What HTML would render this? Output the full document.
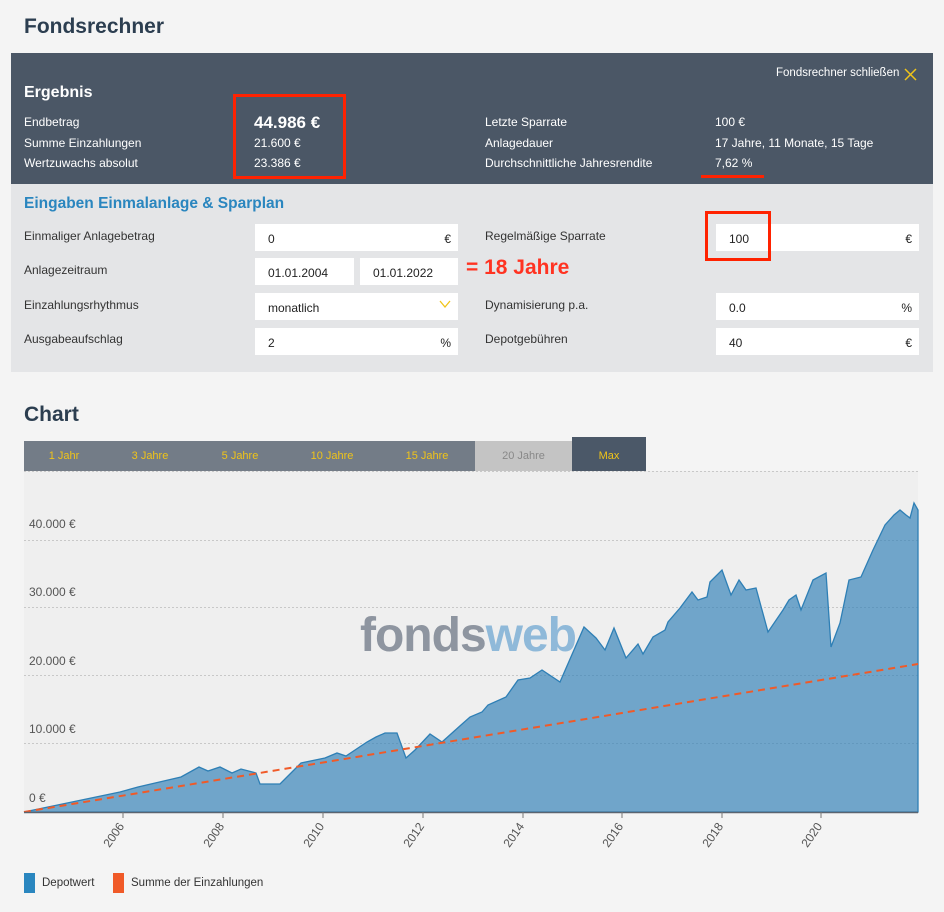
<!DOCTYPE html>
<html><head><meta charset="utf-8"><style>
*{margin:0;padding:0;box-sizing:border-box}
body{width:944px;height:912px;background:#f4f4f4;font-family:"Liberation Sans",sans-serif;position:relative;overflow:hidden;color:#2b2b2b}
.a{position:absolute;white-space:nowrap}
.w{color:#fff;font-size:12px}
.k{font-size:12px;color:#333}
.inp{position:absolute;background:#fff;height:27px;font-size:12px;color:#222;padding:8px 0 0 13px}
.inp span{position:absolute;right:7px;top:8px}
.tab{position:absolute;top:441px;height:30px;font-size:11px;color:#f0c419;text-align:center;line-height:30px}
.yl{position:absolute;left:29px;font-size:12px;color:#555}
.xl{position:absolute;font-size:12px;color:#555;transform:rotate(-55deg);transform-origin:right top}
</style></head><body>
<div class="a" style="left:24px;top:15px;font-size:21px;font-weight:bold;color:#2c3e50">Fondsrechner</div>
<div class="a" style="left:11px;top:53px;width:922px;height:131px;background:#4b5766"></div>
<div class="a w" style="left:776px;top:67px;font-size:11.5px">Fondsrechner schließen</div>
<svg class="a" style="left:904px;top:68px" width="13" height="13"><path d="M1 1L12 12M12 1L1 12" stroke="#f0c419" stroke-width="1.5"/></svg>
<div class="a w" style="left:24px;top:84px;font-size:16px;font-weight:bold">Ergebnis</div>
<div class="a w" style="left:24px;top:115px">Endbetrag</div>
<div class="a w" style="left:24px;top:136px">Summe Einzahlungen</div>
<div class="a w" style="left:24px;top:156px">Wertzuwachs absolut</div>
<div class="a w" style="left:254px;top:113px;font-size:17px;font-weight:bold">44.986 €</div>
<div class="a w" style="left:254px;top:136px">21.600 €</div>
<div class="a w" style="left:254px;top:156px">23.386 €</div>
<div class="a" style="left:233px;top:94px;width:113px;height:85px;border:3px solid #ff2200"></div>
<div class="a w" style="left:485px;top:115px">Letzte Sparrate</div>
<div class="a w" style="left:485px;top:136px">Anlagedauer</div>
<div class="a w" style="left:485px;top:156px">Durchschnittliche Jahresrendite</div>
<div class="a w" style="left:715px;top:115px">100 €</div>
<div class="a w" style="left:715px;top:136px">17 Jahre, 11 Monate, 15 Tage</div>
<div class="a w" style="left:715px;top:156px">7,62 %</div>
<div class="a" style="left:701px;top:175px;width:63px;height:3px;background:#ff2200"></div>
<div class="a" style="left:11px;top:184px;width:922px;height:188px;background:#e4e5e7"></div>
<div class="a" style="left:24px;top:195px;font-size:15.5px;font-weight:bold;color:#2a86bf">Eingaben Einmalanlage &amp; Sparplan</div>
<div class="a k" style="left:24px;top:229px">Einmaliger Anlagebetrag</div>
<div class="a k" style="left:24px;top:263px">Anlagezeitraum</div>
<div class="a k" style="left:24px;top:298px">Einzahlungsrhythmus</div>
<div class="a k" style="left:24px;top:332px">Ausgabeaufschlag</div>
<div class="a k" style="left:485px;top:229px">Regelmäßige Sparrate</div>
<div class="a k" style="left:485px;top:298px">Dynamisierung p.a.</div>
<div class="a k" style="left:485px;top:332px">Depotgebühren</div>
<div class="inp" style="left:255px;top:224px;width:203px">0<span>€</span></div>
<div class="inp" style="left:255px;top:258px;width:99px">01.01.2004</div>
<div class="inp" style="left:360px;top:258px;width:98px">01.01.2022</div>
<div class="inp" style="left:255px;top:293px;width:203px">monatlich<span style="top:5px"><svg width="12" height="10"><path d="M1 2L6 8L11 2" stroke="#f0c419" stroke-width="1.3" fill="none"/></svg></span></div>
<div class="inp" style="left:255px;top:328px;width:203px">2<span>%</span></div>
<div class="inp" style="left:716px;top:224px;width:203px">100<span>€</span></div>
<div class="inp" style="left:716px;top:293px;width:203px">0.0<span>%</span></div>
<div class="inp" style="left:716px;top:328px;width:203px">40<span>€</span></div>
<div class="a" style="left:705px;top:211px;width:66px;height:50px;border:3px solid #ff2200"></div>
<div class="a" style="left:466px;top:256px;font-size:21px;font-weight:bold;color:#ff3322">= 18 Jahre</div>
<div class="a" style="left:24px;top:403px;font-size:21px;font-weight:bold;color:#2c3e50">Chart</div>
<div class="a" style="left:24px;top:441px;width:451px;height:30px;background:#737c87"></div>
<div class="a" style="left:475px;top:441px;width:97px;height:30px;background:#c4c4c4"></div>
<div class="a" style="left:572px;top:437px;width:74px;height:34px;background:#4b5868"></div>
<div class="tab" style="left:24px;width:80px">1 Jahr</div>
<div class="tab" style="left:110px;width:80px">3 Jahre</div>
<div class="tab" style="left:200px;width:80px">5 Jahre</div>
<div class="tab" style="left:292px;width:80px">10 Jahre</div>
<div class="tab" style="left:387px;width:80px">15 Jahre</div>
<div class="tab" style="left:475px;width:97px;color:#888">20 Jahre</div>
<div class="tab" style="left:572px;width:74px">Max</div>
<svg class="a" style="left:0;top:0" width="944" height="912">
<rect x="24" y="471" width="894" height="341" fill="#efefef"/>
<g stroke="#c8c8c8" stroke-dasharray="2,2" stroke-width="1">
<line x1="24" y1="471.5" x2="918" y2="471.5"/><line x1="24" y1="540.5" x2="918" y2="540.5"/><line x1="24" y1="607.5" x2="918" y2="607.5"/><line x1="24" y1="675.5" x2="918" y2="675.5"/><line x1="24" y1="743.5" x2="918" y2="743.5"/></g>
<text x="360" y="651" font-family="Liberation Sans,sans-serif" font-weight="bold" font-size="48" fill="#8e95a0" letter-spacing="-1">fonds<tspan fill="#8fb9d9">web</tspan></text>
<path fill="rgba(52,130,184,0.68)" stroke="#2e7fb5" stroke-width="1.3" d="M24 812L120 792L138 787L181 777L199 767L208 771L220 767L232 773L241 769L256 773L260 784L280 784L289 775L301 763L325 758L337 753L346 756L367 742L376 737L385 733L397 733L406 758L415 750L430 734L442 742L461 725L470 717L482 712L488 705L506 697L518 680L530 678L542 670L560 682L584 627L596 638L605 650L614 628L626 658L638 644L643 654L653 637L665 630L668 622L680 608L692 592L698 600L707 597L710 582L722 570L731 595L739 580L746 590L756 588L768 632L783 610L789 600L796 595L801 610L813 580L826 573L831 647L840 623L849 580L861 577L873 550L885 525L894 515L900 510L906 515L910 518L914 503L918 510L918 812Z"/>
<line x1="24" y1="812" x2="918" y2="664" stroke="#f05a28" stroke-width="2" stroke-dasharray="7,5"/>
<line x1="24" y1="812.5" x2="918" y2="812.5" stroke="#5a6470" stroke-width="1.5"/>
<g stroke="#777"><line x1="123" y1="812" x2="123" y2="818"/><line x1="223" y1="812" x2="223" y2="818"/><line x1="323" y1="812" x2="323" y2="818"/><line x1="423" y1="812" x2="423" y2="818"/><line x1="523" y1="812" x2="523" y2="818"/><line x1="622" y1="812" x2="622" y2="818"/><line x1="722" y1="812" x2="722" y2="818"/><line x1="821" y1="812" x2="821" y2="818"/></g>
</svg>
<div class="yl" style="top:517px">40.000 €</div>
<div class="yl" style="top:585px">30.000 €</div>
<div class="yl" style="top:654px">20.000 €</div>
<div class="yl" style="top:722px">10.000 €</div>
<div class="yl" style="top:791px">0 €</div>
<div class="xl" style="left:89px;top:820px">2006</div>
<div class="xl" style="left:189px;top:820px">2008</div>
<div class="xl" style="left:289px;top:820px">2010</div>
<div class="xl" style="left:389px;top:820px">2012</div>
<div class="xl" style="left:489px;top:820px">2014</div>
<div class="xl" style="left:588px;top:820px">2016</div>
<div class="xl" style="left:688px;top:820px">2018</div>
<div class="xl" style="left:787px;top:820px">2020</div>
<div class="a" style="left:24px;top:873px;width:11px;height:20px;background:#2a86bf"></div>
<div class="a k" style="left:42px;top:877px;font-size:11.5px">Depotwert</div>
<div class="a" style="left:113px;top:873px;width:11px;height:20px;background:#f05a28"></div>
<div class="a k" style="left:131px;top:877px;font-size:11.5px">Summe der Einzahlungen</div>
</body></html>
